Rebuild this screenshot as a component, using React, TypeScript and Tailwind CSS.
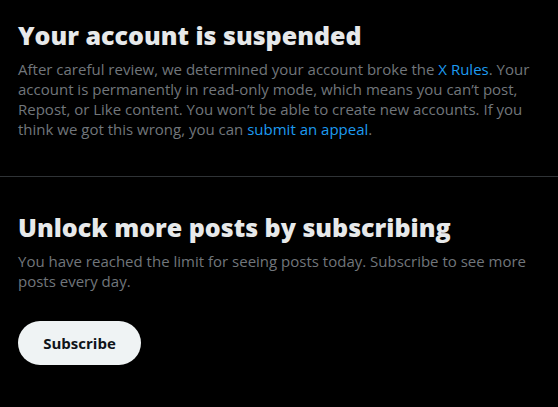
export default function App() {
  return (
    <div className="min-h-screen bg-black font-['Open_Sans',sans-serif]">
      <section className="border-b border-[#2f3336] px-[18px] pt-[19px] pb-[37px]">
        <h1 className="mb-2 text-[25px] leading-8 font-extrabold text-[#e7e9ea]">Your account is suspended</h1>
        <p className="text-[15px] leading-5 text-[#71767b]">
          After careful review, we determined your account broke the{' '}
          <a href="#" className="text-[#1d9bf0]">X Rules</a>. Your account is permanently in read-only mode, which
          means you can’t post, Repost, or Like content. You won’t be able to create new accounts. If you think we
          got this wrong, you can <a href="#" className="text-[#1d9bf0]">submit an appeal</a>.
        </p>
      </section>
      <section className="px-[18px] pt-[34px]">
        <h2 className="mb-2 text-[25px] leading-8 font-extrabold text-[#e7e9ea]">Unlock more posts by subscribing</h2>
        <p className="text-[15px] leading-5 text-[#71767b]">
          You have reached the limit for seeing posts today. Subscribe to see more posts every day.
        </p>
        <button className="mt-[30px] h-11 w-[123px] rounded-full bg-[#eff3f4] text-[15px] leading-5 font-bold text-[#0f1419]">
          Subscribe
        </button>
      </section>
    </div>
  );
}
